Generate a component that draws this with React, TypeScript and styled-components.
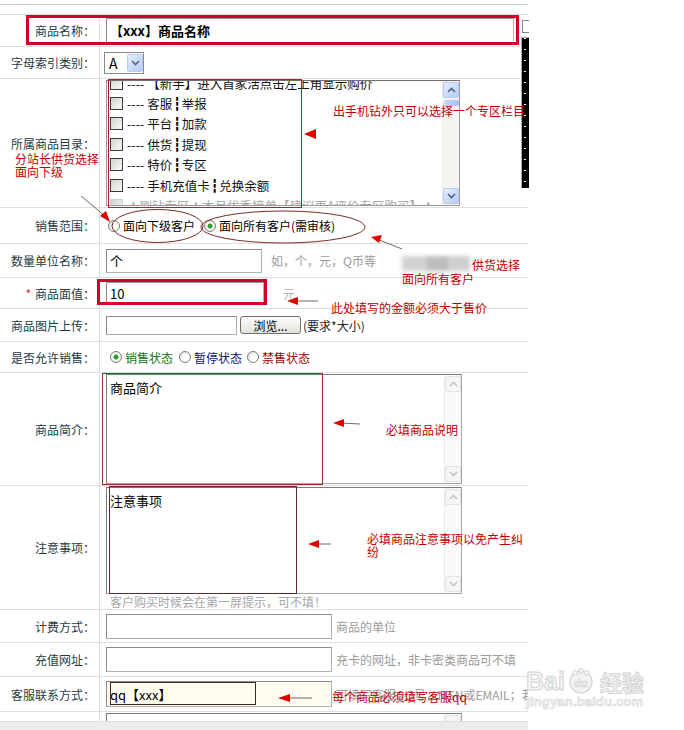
import React from 'react';
import styled, { createGlobalStyle } from 'styled-components';

const GlobalStyle = createGlobalStyle`
  html, body {
    margin: 0;
    padding: 0;
    background: #fff;
  }
  body {
    font-family: "Noto Sans CJK SC", "Liberation Sans", sans-serif;
    font-size: 12px;
    color: #333;
  }
`;

const FONT = `"Noto Sans CJK SC", "Liberation Sans", sans-serif`;

const Page = styled.div`
  position: relative;
  width: 684px;
  height: 730px;
  overflow: hidden;
  background: #fff;
`;

const Form = styled.div`
  width: 528px;
  margin-top: 4px;
  border-top: 1px solid #c8c8c8;
`;

const Spacer = styled.div`
  height: 10px;
  box-sizing: border-box;
  border-bottom: 1px solid #dedede;
`;

const Row = styled.div<{ $h: number }>`
  display: grid;
  grid-template-columns: 100px 1fr;
  height: ${(p) => p.$h}px;
  box-sizing: border-box;
  border-bottom: 1px solid #dedede;
  overflow: hidden;
`;

const Label = styled.div`
  display: flex;
  align-items: center;
  justify-content: flex-end;
  padding-right: 4px;
  border-right: 1px solid #dedede;
  color: #263a44;
  font-size: 12px;
  white-space: nowrap;
`;

const Req = styled.span`
  color: #d03030;
  margin-right: 4px;
`;

const Cell = styled.div<{ $top?: number; $col?: boolean }>`
  display: flex;
  flex-direction: ${(p) => (p.$col ? 'column' : 'row')};
  align-items: ${(p) => (p.$top !== undefined ? 'flex-start' : 'center')};
  padding: ${(p) => p.$top ?? 0}px 0 0 6px;
  overflow: hidden;
  white-space: nowrap;
`;

const TextInput = styled.input<{ $w: number; $h: number; $bg?: string; $bold?: boolean }>`
  box-sizing: border-box;
  width: ${(p) => p.$w}px;
  height: ${(p) => p.$h}px;
  margin: 0;
  padding: 0 3px;
  border: 1px solid #b0b0b0;
  border-top-color: #8c8c8c;
  border-left-color: #8c8c8c;
  background: ${(p) => p.$bg ?? '#fff'};
  font-family: ${FONT};
  font-size: 13px;
  font-weight: ${(p) => (p.$bold ? 700 : 400)};
  color: #000;
  outline: none;
  flex-shrink: 0;
`;

const Hint = styled.span<{ $ml: number; $color?: string }>`
  margin-left: ${(p) => p.$ml}px;
  color: ${(p) => p.$color ?? '#9a9a9a'};
  font-size: 12px;
`;

/* select */
const SelectBox = styled.div`
  display: flex;
  align-items: center;
  width: 40px;
  height: 22px;
  box-sizing: border-box;
  border: 1px solid #8a8a8a;
  background: #fff;
  padding-left: 4px;
  font-size: 14px;
  color: #000;
  margin-left: -2px;
`;

const SelectText = styled.span`
  flex: 1;
`;

const BlueBtn = styled.div<{ $w?: number; $h?: number }>`
  width: ${(p) => p.$w ?? 16}px;
  height: ${(p) => p.$h ?? 16}px;
  box-sizing: border-box;
  border: 1px solid #b7c9f4;
  border-radius: 2px;
  background: linear-gradient(135deg, #e6eefe, #b6cbf7);
  display: flex;
  align-items: center;
  justify-content: center;
  flex-shrink: 0;
`;

const GrayBtn = styled.div`
  width: 16px;
  height: 16px;
  box-sizing: border-box;
  border: 1px solid #e2e2e2;
  border-radius: 2px;
  background: #f6f6f6;
  display: flex;
  align-items: center;
  justify-content: center;
`;

const Chevron = ({ up, color }: { up?: boolean; color: string }) => (
  <svg width="9" height="6" viewBox="0 0 9 6">
    <path
      d={up ? 'M1 5 L4.5 1.5 L8 5' : 'M1 1 L4.5 4.5 L8 1'}
      stroke={color}
      strokeWidth="1.6"
      fill="none"
    />
  </svg>
);

/* list box */
const ListBox = styled.div`
  display: flex;
  width: 354px;
  height: 126px;
  box-sizing: border-box;
  border: 1px solid #9a9a9a;
  border-top-color: #6f6f6f;
  background: #fff;
`;

const ListItems = styled.div`
  flex: 1;
  overflow: hidden;
`;

const ListInner = styled.div`
  margin-top: -8px;
`;

const ListItem = styled.div<{ $faded?: boolean }>`
  display: flex;
  align-items: center;
  height: 20.4px;
  padding-left: 3px;
  font-size: 12.5px;
  color: ${(p) => (p.$faded ? '#a8a8a8' : '#111')};
`;

const Sep = styled.span`
  font-family: "DejaVu Sans", sans-serif;
  font-weight: 700;
  color: #000;
  margin: 0 1px;
`;

const Check = styled.span<{ $faded?: boolean }>`
  width: 13px;
  height: 13px;
  box-sizing: border-box;
  border: 1px solid ${(p) => (p.$faded ? '#cfcfcf' : '#3a3a3a')};
  background: linear-gradient(135deg, #d2d2cc, #fafaf8);
  margin-right: 4px;
  flex-shrink: 0;
`;

const ScrollBar = styled.div<{ $blue?: boolean }>`
  width: 17px;
  display: flex;
  flex-direction: column;
  justify-content: space-between;
  align-items: center;
  padding: 1px 0;
  box-sizing: border-box;
  background: ${(p) => (p.$blue ? '#f5f4ee' : '#fafafa')};
  border-left: 1px solid #ececec;
`;

const ThumbStack = styled.div`
  display: flex;
  flex-direction: column;
  gap: 2px;
  align-items: center;
`;

const Thumb = styled.div`
  width: 15px;
  height: 6px;
  border-radius: 2px;
  background: linear-gradient(90deg, #c7d7fb, #a9c0f3);
`;

/* radios */
const RadioItem = styled.span<{ $lead: number; $color?: string }>`
  display: inline-flex;
  align-items: center;
  margin-left: ${(p) => p.$lead}px;
  color: ${(p) => p.$color ?? '#000'};
  font-size: 12px;
`;

const RadioDot = styled.span<{ $checked?: boolean }>`
  width: 12px;
  height: 12px;
  box-sizing: border-box;
  border-radius: 50%;
  border: 1px solid #7c7c7c;
  margin-right: 3px;
  background: ${(p) =>
    p.$checked
      ? 'radial-gradient(circle, #2fa02f 0 2.3px, #fff 2.8px, #e2e2dc 100%)'
      : 'radial-gradient(circle at 65% 65%, #fff 0 3px, #d8d8d2 100%)'};
`;

/* file upload */
const BrowseButton = styled.span`
  display: inline-flex;
  align-items: center;
  justify-content: center;
  width: 61px;
  height: 18px;
  box-sizing: border-box;
  margin-left: 3px;
  border: 1px solid #707070;
  border-radius: 3px;
  background: linear-gradient(#fefefe, #e0e0da);
  font-size: 12px;
  color: #000;
`;

/* textarea */
const TextArea = styled.div<{ $w: number; $h: number }>`
  display: flex;
  width: ${(p) => p.$w}px;
  height: ${(p) => p.$h}px;
  box-sizing: border-box;
  border: 1px solid #a6a6a6;
  border-top-color: #7a7a7a;
  border-left-color: #7a7a7a;
  background: #fff;
  flex-shrink: 0;
`;

const AreaText = styled.div`
  flex: 1;
  padding: 5px 3px;
  font-size: 13px;
  line-height: 16px;
  color: #000;
`;

const BelowHint = styled.div`
  margin-top: 1px;
  padding-left: 4px;
  color: #a5a5a5;
  font-size: 12px;
  line-height: 13px;
`;

const FootBand = styled.div`
  height: 8px;
  width: 528px;
  background: #ececec;
`;

/* overlays */
const Overlay = styled.svg`
  position: absolute;
  left: 0;
  top: 0;
  pointer-events: none;
`;

const Note = styled.div<{ $x: number; $y: number }>`
  position: absolute;
  left: ${(p) => p.$x}px;
  top: ${(p) => p.$y}px;
  color: #c00000;
  font-size: 12px;
  line-height: 13px;
  white-space: nowrap;
`;

const EdgeBox = styled.div`
  position: absolute;
  left: 522px;
  top: 20px;
  width: 7px;
  height: 13px;
  box-sizing: border-box;
  border: 1px solid #888;
  border-right: none;
  background: #fff;
`;

const EdgeStrip = styled.div`
  position: absolute;
  left: 521px;
  top: 37px;
  width: 8px;
  height: 151px;
  box-sizing: border-box;
  border-left: 1px solid #aaa;
  border-top: 1px solid #aaa;
  background-color: #000;
  background-image: radial-gradient(circle, #fff 0 0.7px, transparent 1.1px);
  background-size: 8px 11px;
  background-position: -1px 28px;
`;

const Watermark = styled.div`
  position: absolute;
  left: 526px;
  top: 668px;
  color: #f3f3f3;
  -webkit-text-stroke: 1px #d4d4d4;
  font-family: "Liberation Sans", sans-serif;
  font-weight: 700;
`;

const MarkLine = styled.div`
  display: flex;
  align-items: center;
  gap: 2px;
  font-size: 25px;
  line-height: 26px;
`;

const MarkCn = styled.span`
  font-family: ${FONT};
  font-size: 22px;
  margin-left: 3px;
`;

const MarkSub = styled.div`
  font-size: 13px;
  line-height: 16px;
  letter-spacing: 0.2px;
  -webkit-text-stroke: 0.6px #d4d4d4;
`;

const listItems: [string, string][] = [
  ['【新手】进入首家活点击左上角显示购价', ''],
  ['客服', '举报'],
  ['平台', '加款'],
  ['供货', '提现'],
  ['特价', '专区'],
  ['手机充值卡', '兑换余额'],
];

const RED = '#d4002c';
const DARK_RED = '#9c2a32';
const ARROW = '#e00000';

const Annotations = () => (
  <Overlay width="684" height="730" viewBox="0 0 684 730">
    <defs>
      <filter id="blur" x="-20%" y="-50%" width="140%" height="200%">
        <feGaussianBlur stdDeviation="2.2" />
      </filter>
    </defs>
    {/* name box */}
    <rect x="27.5" y="16.5" width="490" height="27" fill="none" stroke={RED} strokeWidth="3" />
    {/* category list box */}
    <rect x="108.5" y="79.5" width="193" height="128" fill="none" stroke={DARK_RED} strokeWidth="1" />
    <polygon points="304,134 316,129 316,139" fill={ARROW} />
    {/* line from note to first radio */}
    <line x1="81" y1="196" x2="105" y2="216" stroke="#444" strokeWidth="0.8" />
    <polygon points="110,222 100,216 106,211" fill={ARROW} />
    {/* sale range ellipses */}
    <ellipse cx="157.5" cy="226" rx="45.5" ry="16.5" fill="none" stroke="#7a2a2a" strokeWidth="1" />
    <ellipse cx="283" cy="227" rx="82" ry="16" fill="none" stroke="#7a2a2a" strokeWidth="1" />
    <line x1="402" y1="249" x2="378" y2="239.5" stroke="#444" strokeWidth="0.8" />
    <polygon points="371,237 382,235 379,243" fill={ARROW} />
    {/* blurred out patch */}
    <g filter="url(#blur)">
      <rect x="402" y="256" width="24" height="15" fill="#d2d2d2" />
      <rect x="426" y="256" width="22" height="15" fill="#bdbdbd" />
      <rect x="448" y="256" width="22" height="15" fill="#cfcfcf" />
    </g>
    {/* face value box */}
    <rect x="98.5" y="280.5" width="167" height="23" fill="none" stroke={RED} strokeWidth="3" />
    <line x1="294" y1="301" x2="318" y2="301" stroke="#444" strokeWidth="0.8" />
    <polygon points="287,301 298,297 298,305" fill={ARROW} />
    {/* intro */}
    <rect x="102.5" y="373.5" width="220" height="111" fill="none" stroke={DARK_RED} strokeWidth="1" />
    <line x1="340" y1="423" x2="360" y2="424" stroke="#444" strokeWidth="0.8" />
    <polygon points="333,423 344,419 344,427" fill={ARROW} />
    {/* notes */}
    <rect x="109.5" y="486.5" width="187" height="107" fill="none" stroke="#5a2a2a" strokeWidth="1" />
    <line x1="315" y1="544" x2="331" y2="544" stroke="#444" strokeWidth="0.8" />
    <polygon points="308,544 319,540 319,548" fill={ARROW} />
    {/* service contact */}
    <rect x="110.5" y="682.5" width="145" height="22" fill="none" stroke="#3a2a2a" strokeWidth="1" />
    <line x1="286" y1="698" x2="312" y2="698" stroke="#444" strokeWidth="0.8" />
    <polygon points="278,698 290,694 290,702" fill={ARROW} />
  </Overlay>
);

const PawMark = () => (
  <svg width="28" height="26" viewBox="0 0 28 26">
    <circle cx="14" cy="14" r="11" fill="#f3f3f3" stroke="#d4d4d4" strokeWidth="1.2" />
    <circle cx="8" cy="5" r="2.4" fill="#f3f3f3" stroke="#d4d4d4" />
    <circle cx="14" cy="2.8" r="2.4" fill="#f3f3f3" stroke="#d4d4d4" />
    <circle cx="20" cy="5" r="2.4" fill="#f3f3f3" stroke="#d4d4d4" />
    <text
      x="14"
      y="18.5"
      textAnchor="middle"
      fontSize="11"
      fontFamily="Liberation Sans, sans-serif"
      fontWeight="700"
      fill="#f3f3f3"
      stroke="#d4d4d4"
      strokeWidth="0.7"
    >
      du
    </text>
  </svg>
);

const ScrollArrows = ({ blue }: { blue?: boolean }) => (
  <ScrollBar $blue={blue}>
    {blue ? (
      <ThumbStack>
        <BlueBtn>
          <Chevron up color="#4d6185" />
        </BlueBtn>
        <Thumb />
      </ThumbStack>
    ) : (
      <GrayBtn>
        <Chevron up color="#c4c4c4" />
      </GrayBtn>
    )}
    {blue ? (
      <BlueBtn>
        <Chevron color="#4d6185" />
      </BlueBtn>
    ) : (
      <GrayBtn>
        <Chevron color="#c4c4c4" />
      </GrayBtn>
    )}
  </ScrollBar>
);

export default function App() {
  return (
    <Page>
      <GlobalStyle />
      <Form>
        <Spacer />
        <Row $h={32}>
          <Label>商品名称：</Label>
          <Cell>
            <TextInput $w={408} $h={26} $bold readOnly value="【xxx】商品名称" />
          </Cell>
        </Row>
        <Row $h={32}>
          <Label>字母索引类别：</Label>
          <Cell>
            <SelectBox>
              <SelectText>A</SelectText>
              <BlueBtn $w={16} $h={18}>
                <Chevron color="#4d6185" />
              </BlueBtn>
            </SelectBox>
          </Cell>
        </Row>
        <Row $h={129}>
          <Label>所属商品目录：</Label>
          <Cell $top={1}>
            <ListBox>
              <ListItems>
                <ListInner>
                  {listItems.map(([a, b]) => (
                    <ListItem key={a}>
                      <Check />
                      ---- {a}
                      {b && (
                        <>
                          <Sep>┇</Sep>
                          {b}
                        </>
                      )}
                    </ListItem>
                  ))}
                  <ListItem $faded>
                    <Check $faded />
                    ★刷钻专区★本月优秀榜单【建议再A评价专区购买】★
                  </ListItem>
                </ListInner>
              </ListItems>
              <ScrollArrows blue />
            </ListBox>
          </Cell>
        </Row>
        <Row $h={36}>
          <Label>销售范围：</Label>
          <Cell>
            <RadioItem $lead={2}>
              <RadioDot />
              面向下级客户
            </RadioItem>
            <RadioItem $lead={9}>
              <RadioDot $checked />
              面向所有客户(需审核)
            </RadioItem>
          </Cell>
        </Row>
        <Row $h={34}>
          <Label>数量单位名称：</Label>
          <Cell>
            <TextInput $w={156} $h={24} readOnly value="个" />
            <Hint $ml={9}>如，个，元，Q币等</Hint>
          </Cell>
        </Row>
        <Row $h={31}>
          <Label>
            <Req>*</Req>商品面值：
          </Label>
          <Cell>
            <TextInput $w={158} $h={22} readOnly value="10" />
            <Hint $ml={19} $color="#b0b0b0">
              元
            </Hint>
          </Cell>
        </Row>
        <Row $h={33}>
          <Label>商品图片上传：</Label>
          <Cell>
            <TextInput $w={131} $h={19} readOnly value="" />
            <BrowseButton>浏览...</BrowseButton>
            <Hint $ml={2} $color="#222">
              (要求*大小)
            </Hint>
          </Cell>
        </Row>
        <Row $h={31}>
          <Label>是否允许销售：</Label>
          <Cell>
            <RadioItem $lead={4} $color="#127312">
              <RadioDot $checked />
              销售状态
            </RadioItem>
            <RadioItem $lead={6} $color="#12127a">
              <RadioDot />
              暂停状态
            </RadioItem>
            <RadioItem $lead={5} $color="#a00000">
              <RadioDot />
              禁售状态
            </RadioItem>
          </Cell>
        </Row>
        <Row $h={113}>
          <Label>商品简介：</Label>
          <Cell $top={1}>
            <TextArea $w={356} $h={110}>
              <AreaText>商品简介</AreaText>
              <ScrollArrows />
            </TextArea>
          </Cell>
        </Row>
        <Row $h={124}>
          <Label>注意事项：</Label>
          <Cell $top={1} $col>
            <TextArea $w={356} $h={107}>
              <AreaText>注意事项</AreaText>
              <ScrollArrows />
            </TextArea>
            <BelowHint>客户购买时候会在第一屏提示，可不填！</BelowHint>
          </Cell>
        </Row>
        <Row $h={33}>
          <Label>计费方式：</Label>
          <Cell>
            <TextInput $w={226} $h={25} readOnly value="" />
            <Hint $ml={4}>商品的单位</Hint>
          </Cell>
        </Row>
        <Row $h={34}>
          <Label>充值网址：</Label>
          <Cell>
            <TextInput $w={226} $h={25} readOnly value="" />
            <Hint $ml={4}>充卡的网址，非卡密类商品可不填</Hint>
          </Cell>
        </Row>
        <Row $h={35}>
          <Label>客服联系方式：</Label>
          <Cell>
            <TextInput $w={226} $h={26} $bg="#fffcef" readOnly value="qq【xxx】" />
            <Hint $ml={4}>可填写客服QQ号，MSN或EMAIL；若qq</Hint>
          </Cell>
        </Row>
        <Row $h={10}>
          <Label />
          <Cell $top={1}>
            <TextArea $w={356} $h={60}>
              <AreaText />
              <ScrollArrows />
            </TextArea>
          </Cell>
        </Row>
        <FootBand />
      </Form>

      <EdgeBox />
      <EdgeStrip />

      <Annotations />
      <Note $x={333} $y={104}>出手机钻外只可以选择一个专区栏目</Note>
      <Note $x={15} $y={152}>
        分站长供货选择
        <br />
        面向下级
      </Note>
      <Note $x={472} $y={258}>供货选择</Note>
      <Note $x={402} $y={272}>面向所有客户</Note>
      <Note $x={331} $y={301}>此处填写的金额必须大于售价</Note>
      <Note $x={386} $y={423}>必填商品说明</Note>
      <Note $x={367} $y={532}>
        必填商品注意事项以免产生纠
        <br />
        纷
      </Note>
      <Note $x={332} $y={690}>每个商品必须填写客服qq</Note>

      <Watermark>
        <MarkLine>
          Bai
          <PawMark />
          <MarkCn>经验</MarkCn>
        </MarkLine>
        <MarkSub>jingyan.baidu.com</MarkSub>
      </Watermark>
    </Page>
  );
}
